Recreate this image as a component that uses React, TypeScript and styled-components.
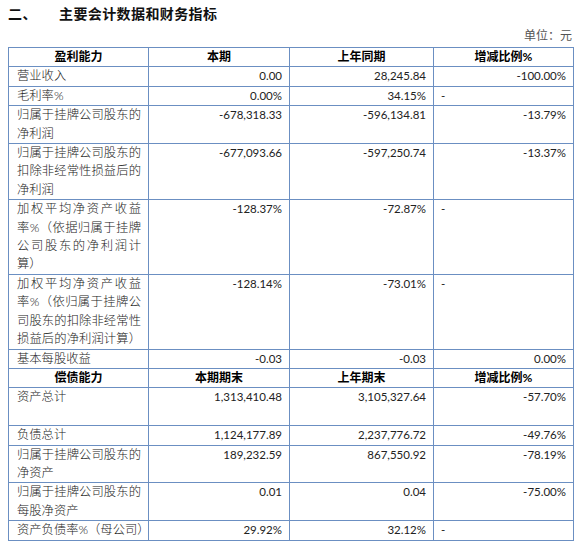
import styled, { createGlobalStyle } from "styled-components";

const GlobalStyle = createGlobalStyle`
  body {
    margin: 0;
    background: #fff;
    font-family: Lato, "Noto Sans CJK SC", sans-serif;
  }
`;

type Row = {
  label: string[];
  fullLast?: boolean;
  lines?: number;
  cur: string;
  prev: string;
  chg: string;
};

const profitRows: Row[] = [
  { label: ["营业收入"], cur: "0.00", prev: "28,245.84", chg: "-100.00%" },
  { label: ["毛利率%"], cur: "0.00%", prev: "34.15%", chg: "-" },
  { label: ["归属于挂牌公司股东的", "净利润"], cur: "-678,318.33", prev: "-596,134.81", chg: "-13.79%" },
  {
    label: ["归属于挂牌公司股东的", "扣除非经常性损益后的", "净利润"],
    cur: "-677,093.66",
    prev: "-597,250.74",
    chg: "-13.37%",
  },
  {
    label: ["加权平均净资产收益", "率%（依据归属于挂牌", "公司股东的净利润计", "算）"],
    cur: "-128.37%",
    prev: "-72.87%",
    chg: "-",
  },
  {
    label: ["加权平均净资产收益", "率%（依归属于挂牌公", "司股东的扣除非经常性", "损益后的净利润计算）"],
    fullLast: true,
    cur: "-128.14%",
    prev: "-73.01%",
    chg: "-",
  },
  { label: ["基本每股收益"], cur: "-0.03", prev: "-0.03", chg: "0.00%" },
];

const debtRows: Row[] = [
  { label: ["资产总计"], lines: 2, cur: "1,313,410.48", prev: "3,105,327.64", chg: "-57.70%" },
  { label: ["负债总计"], cur: "1,124,177.89", prev: "2,237,776.72", chg: "-49.76%" },
  { label: ["归属于挂牌公司股东的", "净资产"], cur: "189,232.59", prev: "867,550.92", chg: "-78.19%" },
  { label: ["归属于挂牌公司股东的", "每股净资产"], cur: "0.01", prev: "0.04", chg: "-75.00%" },
  { label: ["资产负债率%（母公司）"], fullLast: true, cur: "29.92%", prev: "32.12%", chg: "-" },
];

const LINE = 18.4;

const Page = styled.div`
  padding: 3px 0 0 8px;
  width: 565px;
`;

const Title = styled.h2`
  margin: 0;
  font-family: "Noto Sans CJK SC", sans-serif;
  font-size: 14px;
  font-weight: 700;
  line-height: 20px;
  letter-spacing: 0.4px;
  color: #111;
`;

const TitleNo = styled.span`
  display: inline-block;
  width: 51px;
`;

const Unit = styled.div`
  margin-top: 5px;
  text-align: right;
  font-family: "Liberation Serif", "Noto Sans CJK SC", serif;
  font-size: 12px;
  line-height: 16px;
  color: #555;
  padding-right: 1px;
`;

const Table = styled.table`
  margin-top: 3px;
  width: 565px;
  table-layout: fixed;
  border-collapse: collapse;
`;

const HeadCell = styled.th`
  border: 1px solid #6b8fc2;
  padding: 0 7px;
  height: ${LINE}px;
  line-height: ${LINE}px;
  font-family: Lato, "Noto Sans CJK SC", sans-serif;
  font-size: 12px;
  font-weight: 700;
  color: #000;
  text-align: center;
`;

const Cell = styled.td<{ $align?: "left" | "right"; $lines?: number }>`
  border: 1px solid #6b8fc2;
  padding: 0 7px;
  vertical-align: top;
  height: ${(p) => (p.$lines || 1) * LINE}px;
  line-height: ${LINE}px;
  font-family: Lato, "Noto Sans CJK SC", sans-serif;
  font-size: 11.5px;
  color: #222;
  text-align: ${(p) => p.$align || "right"};
  white-space: nowrap;
`;

const LabelCell = styled(Cell)`
  padding-left: 8px;
  font-size: 12.3px;
  font-weight: 300;
  color: #222;
`;

const LabelLine = styled.span<{ $full?: boolean }>`
  display: block;
  white-space: nowrap;
  text-align: left;
  text-align-last: ${(p) => (p.$full ? "justify" : "left")};
`;

const Label = ({ lines, fullLast }: { lines: string[]; fullLast?: boolean }) => (
  <>
    {lines.map((l, i) => (
      <LabelLine key={i} $full={i < lines.length - 1 || fullLast}>
        {l}
      </LabelLine>
    ))}
  </>
);

const Header = ({ cols }: { cols: string[] }) => (
  <tr>
    {cols.map((c) => (
      <HeadCell key={c}>{c}</HeadCell>
    ))}
  </tr>
);

const DataRow = ({ row }: { row: Row }) => (
  <tr>
    <LabelCell $align="left" $lines={row.lines || row.label.length}>
      <Label lines={row.label} fullLast={row.fullLast} />
    </LabelCell>
    <Cell>{row.cur}</Cell>
    <Cell>{row.prev}</Cell>
    <Cell $align={row.chg === "-" ? "left" : "right"}>{row.chg}</Cell>
  </tr>
);

export default function App() {
  return (
    <Page>
      <GlobalStyle />
      <Title>
        <TitleNo>二、</TitleNo>主要会计数据和财务指标
      </Title>
      <Unit>单位：元</Unit>
      <Table>
        <colgroup>
          <col style={{ width: 140 }} />
          <col style={{ width: 141 }} />
          <col style={{ width: 144 }} />
          <col style={{ width: 140 }} />
        </colgroup>
        <tbody>
          <Header cols={["盈利能力", "本期", "上年同期", "增减比例%"]} />
          {profitRows.map((r, i) => (
            <DataRow key={"p" + i} row={r} />
          ))}
          <Header cols={["偿债能力", "本期期末", "上年期末", "增减比例%"]} />
          {debtRows.map((r, i) => (
            <DataRow key={"d" + i} row={r} />
          ))}
        </tbody>
      </Table>
    </Page>
  );
}
